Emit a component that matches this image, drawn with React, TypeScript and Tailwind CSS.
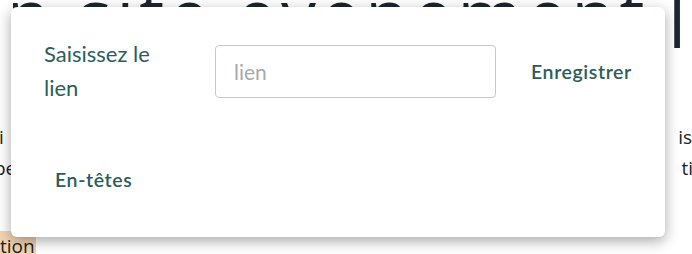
const LinkPopover = () => {
  return (
    <div className="absolute left-[11px] top-[7px] flex h-[230px] w-[654px] flex-col rounded-md bg-white pl-[33px] pr-[30px] pt-[38px] shadow-[0_4px_14px_rgba(0,0,0,0.35)] font-['Lato',sans-serif]">
      <div className="flex items-start">
        <label className="-mt-[8px] w-[140px] text-[22px] leading-[34px] text-[#2b5e58]">
          Saisissez le lien
        </label>
        <input
          type="text"
          placeholder="lien"
          className="ml-[31px] h-[53px] w-[281px] rounded border border-[#c8c8c8] px-[18px] text-[21px] text-[#333] outline-none placeholder:text-[#a9a9a9]"
        />
        <button className="ml-[35px] mt-[12px] text-[19.5px] font-semibold tracking-[0.6px] text-[#2b5e58]">
          Enregistrer
        </button>
      </div>
      <button className="ml-[11px] mt-[60px] w-max text-[19.5px] font-semibold tracking-[0.6px] text-[#2b5e58]">
        En-têtes
      </button>
    </div>
  )
}

const App = () => {
  return (
    <div className="relative h-[254px] w-[692px] overflow-hidden bg-white font-['Open_Sans',sans-serif] text-[#1c2630]">
      <div className="-mt-[22px] flex items-start justify-between whitespace-nowrap text-[70px] font-medium leading-[70px]">
        <h1 className="-ml-[40px] tracking-[5px]">on site evenement</h1>
        <span className="mr-[6px] mt-[8px]">l</span>
      </div>
      <div className="mt-[66px] flex flex-col text-[19px] leading-[31px] text-[#222]">
        <div className="flex justify-between">
          <span className="-ml-[1px]">i</span>
          <span>is</span>
        </div>
        <div className="flex justify-between">
          <span className="-ml-[6px]">pe</span>
          <span className="-mr-[1px]">ti</span>
        </div>
        <div className="mt-[47px] flex">
          <span className="-ml-[3px] bg-[#f2d4b4] pl-[3px] pr-[1px]">tion</span>
        </div>
      </div>
      <LinkPopover />
    </div>
  )
}

export default App
